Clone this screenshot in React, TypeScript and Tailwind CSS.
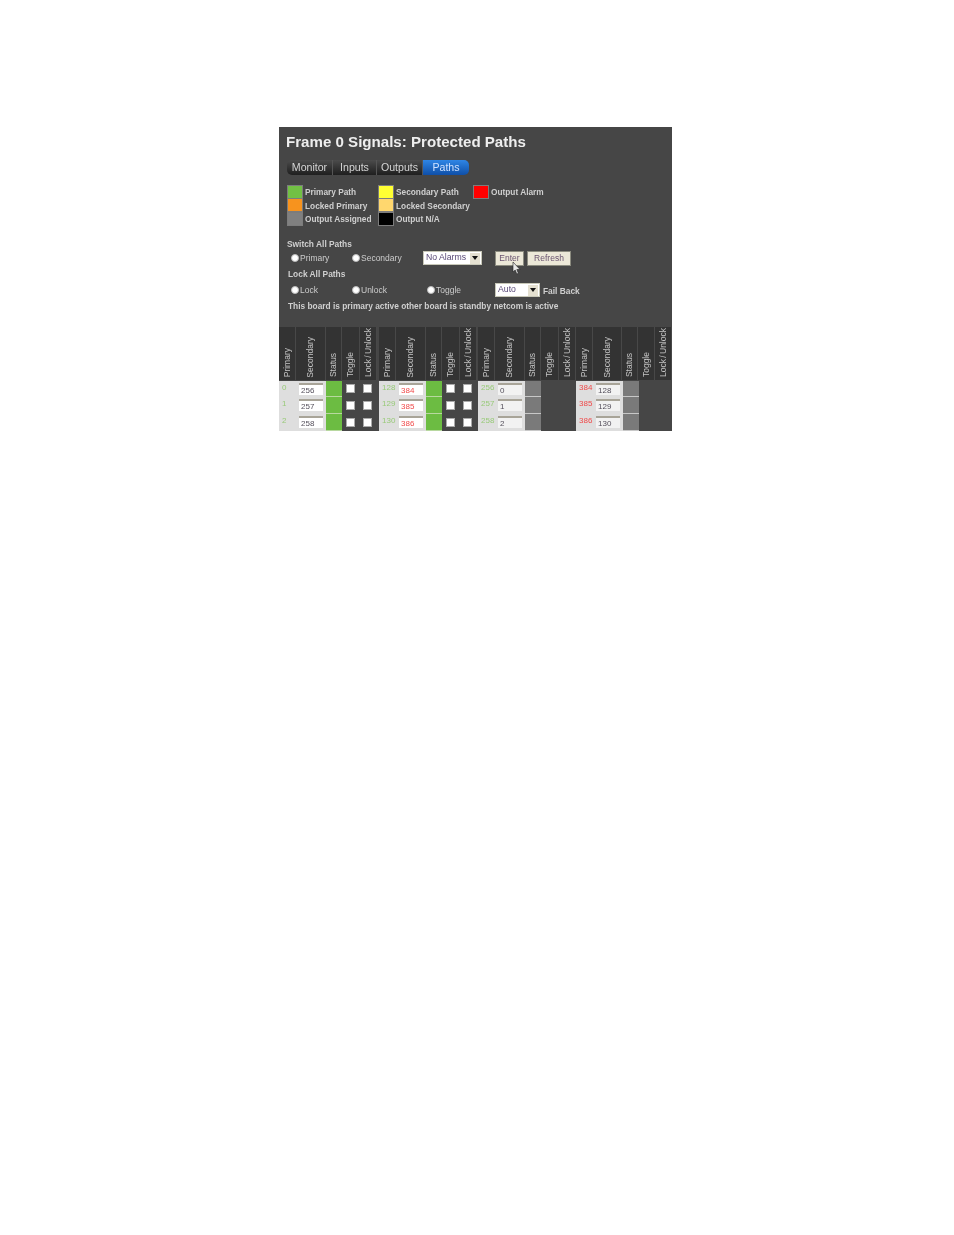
import React from "react";

const groups = [
  {
    checks: true,
    w: "w-[100px]",
    status: "bg-[#6cbc42] border-[#b8d8a0]",
    input: "bg-white",
    rows: [
      { primary: "0", second: "256", primaryColor: "text-[#98ca78]", secondColor: "text-[#55505c]" },
      { primary: "1", second: "257", primaryColor: "text-[#98ca78]", secondColor: "text-[#55505c]" },
      { primary: "2", second: "258", primaryColor: "text-[#98ca78]", secondColor: "text-[#55505c]" },
    ],
  },
  {
    checks: true,
    w: "w-[99px]",
    status: "bg-[#6cbc42] border-[#b8d8a0]",
    input: "bg-white",
    rows: [
      { primary: "128", second: "384", primaryColor: "text-[#98ca78]", secondColor: "text-[#f04a4a]" },
      { primary: "129", second: "385", primaryColor: "text-[#98ca78]", secondColor: "text-[#f04a4a]" },
      { primary: "130", second: "386", primaryColor: "text-[#98ca78]", secondColor: "text-[#f04a4a]" },
    ],
  },
  {
    checks: false,
    w: "w-[98px]",
    status: "bg-[#7a7a7a] border-[#c8c8c8]",
    input: "bg-[#f2f2f2]",
    rows: [
      { primary: "256", second: "0", primaryColor: "text-[#98ca78]", secondColor: "text-[#55505c]" },
      { primary: "257", second: "1", primaryColor: "text-[#98ca78]", secondColor: "text-[#55505c]" },
      { primary: "258", second: "2", primaryColor: "text-[#98ca78]", secondColor: "text-[#55505c]" },
    ],
  },
  {
    checks: false,
    w: "w-[96px]",
    status: "bg-[#7a7a7a] border-[#c8c8c8]",
    input: "bg-[#f2f2f2]",
    rows: [
      { primary: "384", second: "128", primaryColor: "text-[#f04a4a]", secondColor: "text-[#55505c]" },
      { primary: "385", second: "129", primaryColor: "text-[#f04a4a]", secondColor: "text-[#55505c]" },
      { primary: "386", second: "130", primaryColor: "text-[#f04a4a]", secondColor: "text-[#55505c]" },
    ],
  },
];

function Tab({ label, w, first, active }: { label: string; w: string; first?: boolean; active?: boolean }) {
  if (active) {
    return (
      <div className={`${w} h-[15px] flex items-center justify-center rounded-r-[5px] bg-gradient-to-b from-[#2f86e6] to-[#0f4fa8] text-[#cfe2ff] text-[10.6px]`}>
        {label}
      </div>
    );
  }
  return (
    <div
      className={`${w} ${first ? "rounded-l-[5px]" : ""} h-[15px] flex items-center justify-center border-r border-[#555] bg-gradient-to-b from-[#4c4c4c] to-[#1f1f1f] text-[#d6d6d6] text-[10.6px]`}
    >
      {label}
    </div>
  );
}

function Legend({ color, label }: { color: string; label: string }) {
  return (
    <div className="flex items-center h-[13.5px]">
      <span className={`w-[16px] h-[14px] shrink-0 border border-[#7c7c7c] ${color}`} />
      <span className="ml-[2px] mt-[1px] text-[8.3px] font-bold text-[#cfcfcf] whitespace-nowrap">{label}</span>
    </div>
  );
}

function Radio({ label, w }: { label: string; w: string }) {
  return (
    <div className={`flex items-center ${w}`}>
      <span className="w-[8px] h-[8px] rounded-full bg-white border border-[#bbb]" />
      <span className="ml-[1px] text-[8.5px] text-[#cccccc] whitespace-nowrap">{label}</span>
    </div>
  );
}

function Select({ label, w }: { label: string; w: string }) {
  return (
    <div className={`${w} h-[14px] bg-white border border-[#c8c8b8] flex items-center justify-between pl-[2px] pr-[1px]`}>
      <span className="text-[8.7px] text-[#5a4a78]">{label}</span>
      <span className="w-[10px] h-[11px] bg-[#e4e0d0] flex items-center justify-center">
        <svg width="6" height="4" viewBox="0 0 6 4">
          <path d="M0 0h6L3 4z" fill="#111" />
        </svg>
      </span>
    </div>
  );
}

function Btn({ label, w }: { label: string; w: string }) {
  return (
    <div className={`${w} h-[15px] bg-[#ece8d8] border border-[#8c8c80] flex items-center justify-center text-[8.5px] text-[#6a5470]`}>
      {label}
    </div>
  );
}

function HeadCell({ label, w }: { label: string; w: string }) {
  return (
    <div className={`${w} h-[53px] bg-[#333333] border-r border-[#484848] flex items-end justify-center pb-[2px]`}>
      <span className="[writing-mode:vertical-rl] rotate-180 text-[8.5px] [word-spacing:-1px] text-[#c4c4c4] whitespace-nowrap leading-none">
        {label}
      </span>
    </div>
  );
}

function Check() {
  return <span className="w-[9px] h-[9px] bg-white border border-[#aaa]" />;
}

export default function App() {
  return (
    <div className="w-[954px] h-[1235px] bg-white pt-[127px] pl-[279px] [font-family:'Liberation_Sans',Arial,sans-serif]">
      <div className="relative w-[393px] h-[304px] bg-[#464646] overflow-hidden blur-[0.45px]">
        <h1 className="ml-[7px] mt-[6px] h-[18px] leading-[18px] text-[15.1px] font-bold text-[#eeeeee] whitespace-nowrap">
          Frame 0 Signals: Protected Paths
        </h1>

        <div className="ml-[8px] mt-[9px] flex w-fit">
          <Tab label="Monitor" w="w-[46px]" first />
          <Tab label="Inputs" w="w-[44px]" />
          <Tab label="Outputs" w="w-[46px]" />
          <Tab label="Paths" w="w-[46px]" active />
        </div>

        <div className="ml-[8px] mt-[10px] flex">
          <div className="w-[91px]">
            <Legend color="bg-[#72c044]" label="Primary Path" />
            <Legend color="bg-[#f7931e]" label="Locked Primary" />
            <Legend color="bg-[#808080]" label="Output Assigned" />
          </div>
          <div className="w-[95px]">
            <Legend color="bg-[#ffff33]" label="Secondary Path" />
            <Legend color="bg-[#ffd76e]" label="Locked Secondary" />
            <Legend color="bg-black" label="Output N/A" />
          </div>
          <div className="w-[90px]">
            <Legend color="bg-[#ff0000]" label="Output Alarm" />
          </div>
        </div>

        <div className="ml-[8px] mt-[13px] h-[11px] leading-[11px] text-[8.4px] font-bold text-[#cfcfcf]">Switch All Paths</div>

        <div className="ml-[12px] mt-[1px] flex items-center h-[15px]">
          <Radio label="Primary" w="w-[61px]" />
          <Radio label="Secondary" w="w-[71px]" />
          <Select label="No Alarms" w="w-[59px]" />
          <div className="ml-[13px]">
            <Btn label="Enter" w="w-[29px]" />
          </div>
          <div className="ml-[3px]">
            <Btn label="Refresh" w="w-[44px]" />
          </div>
        </div>

        <div className="ml-[9px] mt-[3px] h-[11px] leading-[11px] text-[8.4px] font-bold text-[#cfcfcf]">Lock All Paths</div>

        <div className="ml-[12px] mt-[3px] flex items-center h-[15px]">
          <Radio label="Lock" w="w-[61px]" />
          <Radio label="Unlock" w="w-[75px]" />
          <Radio label="Toggle" w="w-[68px]" />
          <Select label="Auto" w="w-[45px]" />
          <span className="ml-[3px] mt-[2px] text-[8.4px] font-bold text-[#cfcfcf]">Fail Back</span>
        </div>

        <div className="ml-[9px] mt-[2px] h-[12px] leading-[12px] text-[8.35px] font-bold text-[#cfcfcf] whitespace-nowrap">
          This board is primary active other board is standby netcom is active
        </div>

        <div className="mt-[15px] flex">
          {groups.map((g, i) => (
            <div key={i} className={`${g.w} shrink-0`}>
              <div className="flex">
                <HeadCell label="Primary" w="w-[17px]" />
                <HeadCell label="Secondary" w="w-[30px]" />
                <HeadCell label="Status" w="w-[16px]" />
                <HeadCell label="Toggle" w="w-[18px]" />
                <HeadCell label="Lock / Unlock" w="w-[17px]" />
              </div>
              <div className="mt-[1px]">
                {g.rows.map((r) => (
                  <div key={r.primary} className="flex h-[16.8px]">
                    <div className="w-[47px] flex bg-[#dedede] pt-[1px]">
                      <span className={`w-[20px] pl-[3px] text-[8px] leading-[11px] ${r.primaryColor}`}>{r.primary}</span>
                      <span className={`mt-[1px] w-[24px] h-[12px] border-t-2 border-[#a8a498] pl-[2px] text-[8px] leading-[11px] ${g.input} ${r.secondColor}`}>
                        {r.second}
                      </span>
                    </div>
                    <div className={`w-[16px] border-b ${g.status}`} />
                    {g.checks && (
                      <>
                        <div className="w-[17px] flex items-center justify-center">
                          <Check />
                        </div>
                        <div className="w-[17px] flex items-center justify-center">
                          <Check />
                        </div>
                      </>
                    )}
                  </div>
                ))}
              </div>
            </div>
          ))}
        </div>

        <svg className="absolute left-[233px] top-[135px]" width="9" height="13" viewBox="0 0 9 13">
          <path d="M1 0v10l2.2-2 1.6 4 1.6-.7-1.6-3.8H8z" fill="#e8e8e8" stroke="#222" strokeWidth="0.6" />
        </svg>
      </div>
    </div>
  );
}
